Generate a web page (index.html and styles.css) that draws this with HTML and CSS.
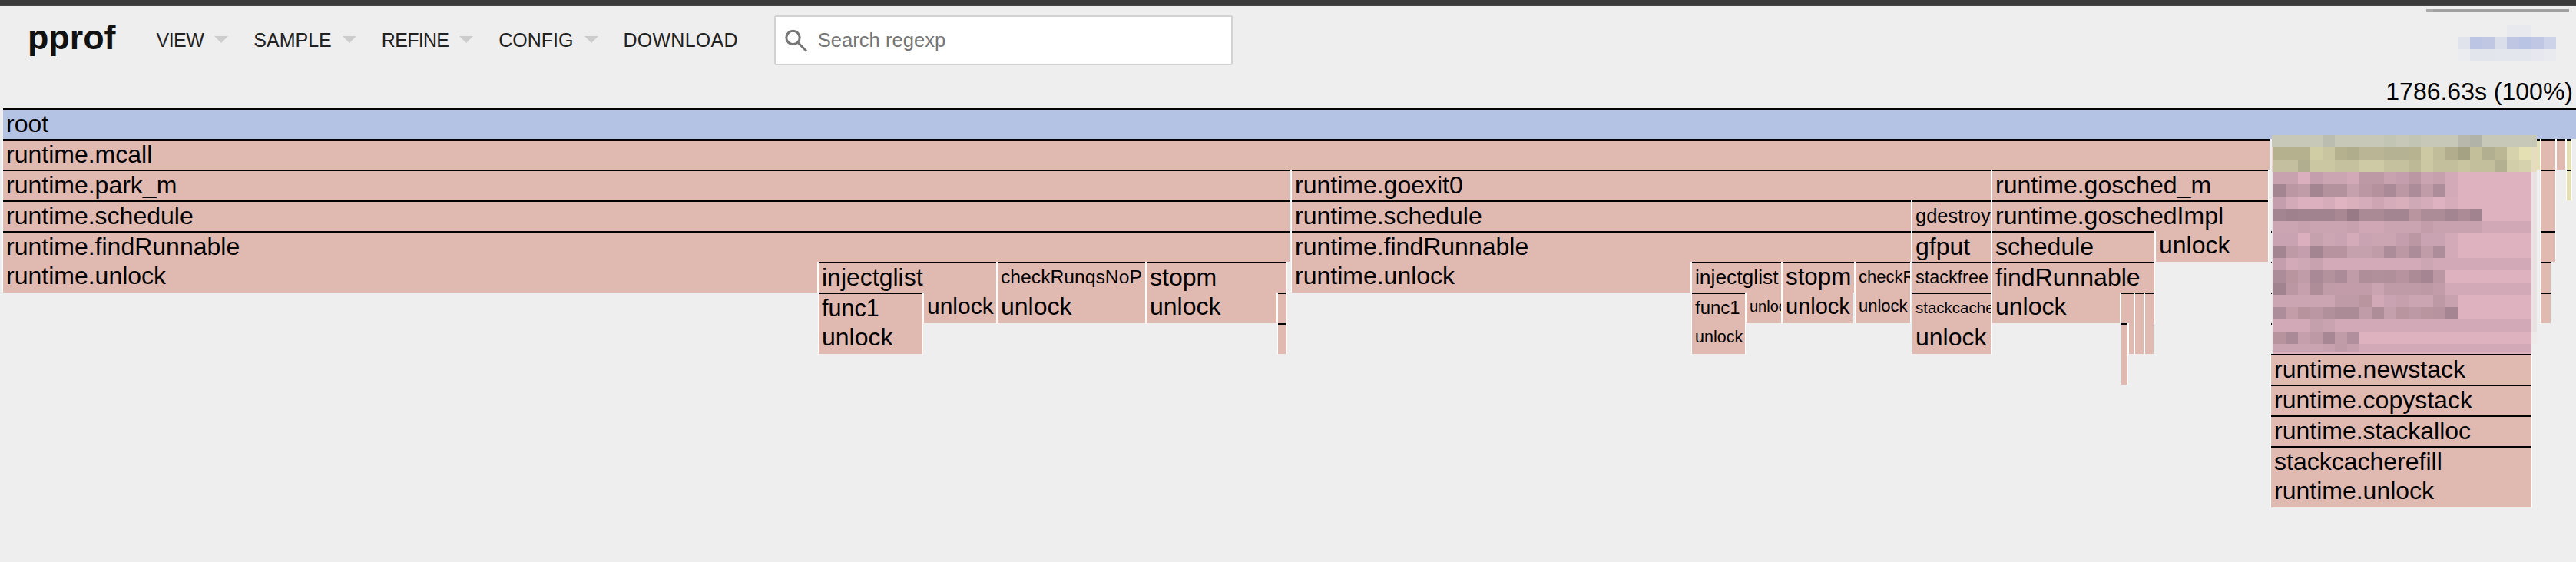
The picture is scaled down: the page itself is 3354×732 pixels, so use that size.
FILE: index.html
```html
<!DOCTYPE html>
<html lang="en">
<head>
<meta charset="utf-8">
<title>pprof</title>
<link rel="stylesheet" href="styles.css">
</head>
<body>
<div class="topbar"></div>
<header class="header">
  <div class="logo">pprof</div>
  <nav class="menu">
    <div class="menu-item view">VIEW<span class="caret"></span></div>
    <div class="menu-item">SAMPLE<span class="caret"></span></div>
    <div class="menu-item refine">REFINE<span class="caret"></span></div>
    <div class="menu-item">CONFIG<span class="caret"></span></div>
    <div class="menu-item download">DOWNLOAD</div>
  </nav>
  <div class="search">
    <svg class="search-icon" viewBox="0 0 30 30" width="30" height="30"><circle cx="10.5" cy="11" r="8.7"/><path d="M16.8 17.3 28 28.5"/></svg>
    <span class="search-text">Search regexp</span>
  </div>
  <svg class="account" width="186" height="68" viewBox="0 0 186 68" shape-rendering="crispEdges">
    <rect x="0" y="0" width="9" height="4" fill="#aaaaaa"/><rect x="9" y="0" width="177" height="4" fill="#a0a0a0"/>
    <rect x="105" y="20" width="32" height="16" fill="#e8e9ee"/>
    <rect x="41" y="36" width="16" height="16" fill="#e1e3ec"/><rect x="57" y="36" width="16" height="16" fill="#bcc5e3"/><rect x="73" y="36" width="16" height="16" fill="#bfc7e2"/><rect x="89" y="36" width="16" height="16" fill="#dadeea"/><rect x="105" y="36" width="16" height="16" fill="#bec6e4"/><rect x="121" y="36" width="16" height="16" fill="#b9c3e3"/><rect x="137" y="36" width="16" height="16" fill="#bfc7e4"/><rect x="153" y="36" width="16" height="16" fill="#cdd3e8"/>
    <rect x="41" y="52" width="16" height="16" fill="#ebecf0"/><rect x="57" y="52" width="32" height="16" fill="#e3e5ec"/><rect x="89" y="52" width="48" height="16" fill="#e4e6ee"/><rect x="137" y="52" width="16" height="16" fill="#e7e8ef"/><rect x="153" y="52" width="16" height="16" fill="#e9eaef"/>
  </svg>
</header>
<div class="total">1786.63s (100%)</div>
<main class="flame">
  <div class="box root r0" style="left:4px;width:3350px">root</div>

  <div class="box r1" style="left:4px;width:2951px">runtime.mcall</div>
  <div class="box r1" style="left:3308px;width:19px"></div>
  <div class="box r1" style="left:3329px;width:11px"></div>
  <div class="box r1 yellow" style="left:3342px;width:6px"></div>
  <div class="box r1 yellow" style="left:3303px;width:3px"></div>

  <div class="box r2" style="left:4px;width:1675px">runtime.park_m</div>
  <div class="box r2" style="left:1682px;width:910px">runtime.goexit0</div>
  <div class="box r2" style="left:2594px;width:359px">runtime.gosched_m</div>
  <div class="box r2 tall" style="left:3308px;width:19px"></div>
  <div class="box r2 yellow" style="left:3342px;width:6px"></div>

  <div class="box r3" style="left:4px;width:1675px">runtime.schedule</div>
  <div class="box r3" style="left:1682px;width:806px">runtime.schedule</div>
  <div class="box r3" style="left:2490px;width:102px;font-size:25.5px">gdestroy</div>
  <div class="box r3" style="left:2594px;width:359px">runtime.goschedImpl</div>

  <div class="box r4" style="left:4px;width:1675px">runtime.findRunnable</div>
  <div class="box r4" style="left:1682px;width:806px">runtime.findRunnable</div>
  <div class="box r4" style="left:2490px;width:102px">gfput</div>
  <div class="box r4" style="left:2594px;width:211px">schedule</div>
  <div class="box r4 flat" style="left:2807px;width:146px">unlock</div>
  <div class="box r4" style="left:3308px;width:19px"></div>

  <div class="box r5 flat" style="left:4px;width:1060px">runtime.unlock</div>
  <div class="box r5" style="left:1066px;width:231px">injectglist</div>
  <div class="box r5" style="left:1299px;width:192px;font-size:24.7px">checkRunqsNoP</div>
  <div class="box r5" style="left:1493px;width:182px">stopm</div>
  <div class="box r5 flat" style="left:1682px;width:519px">runtime.unlock</div>
  <div class="box r5" style="left:2203px;width:116px;font-size:26.4px">injectglist</div>
  <div class="box r5" style="left:2321px;width:93px;font-size:31.3px">stopm</div>
  <div class="box r5" style="left:2416px;width:71px;font-size:22px">checkRunqsNoP</div>
  <div class="box r5" style="left:2490px;width:102px;font-size:23.4px">stackfree</div>
  <div class="box r5" style="left:2594px;width:211px">findRunnable</div>
  <div class="box r5" style="left:3308px;width:13px"></div>

  <div class="box r6" style="left:1066px;width:135px;font-size:30.5px">func1</div>
  <div class="box r6 flat" style="left:1203px;width:94px;font-size:30px">unlock</div>
  <div class="box r6 flat" style="left:1299px;width:192px">unlock</div>
  <div class="box r6 flat" style="left:1493px;width:169px">unlock</div>
  <div class="box r6" style="left:1664px;width:11px"></div>
  <div class="box r6" style="left:2203px;width:69px;font-size:24px">func1</div>
  <div class="box r6 flat" style="left:2274px;width:45px;font-size:20px">unlock</div>
  <div class="box r6 flat" style="left:2321px;width:91px;font-size:29px">unlock</div>
  <div class="box r6 flat" style="left:2416px;width:71px;font-size:22px">unlock</div>
  <div class="box r6" style="left:2490px;width:102px;font-size:20.5px">stackcacherefill</div>
  <div class="box r6 flat" style="left:2594px;width:166px">unlock</div>
  <div class="box r6" style="left:2762px;width:16px"></div>
  <div class="box r6" style="left:2780px;width:11px"></div>
  <div class="box r6" style="left:2793px;width:12px"></div>
  <div class="box r6" style="left:3308px;width:13px"></div>

  <div class="box r7 flat" style="left:1066px;width:135px">unlock</div>
  <div class="box r7" style="left:1664px;width:11px"></div>
  <div class="box r7 flat" style="left:2203px;width:69px;font-size:21.5px">unlock</div>
  <div class="box r7 flat" style="left:2490px;width:102px">unlock</div>
  <div class="box r7 tall" style="left:2762px;width:8px"></div>
  <div class="box r7 flat" style="left:2772px;width:6px"></div>
  <div class="box r7 flat" style="left:2780px;width:11px"></div>
  <div class="box r7 flat" style="left:2793px;width:11px"></div>

  <div class="tick t4" style="left:2957px"></div>
  <div class="tick t5" style="left:2957px"></div>
  <div class="tick t6" style="left:2957px"></div>
  <div class="tick t7" style="left:2957px"></div>

  <svg class="mosaic" width="345" height="285" viewBox="0 0 345 285" shape-rendering="crispEdges">
    <rect x="0" y="0" width="345" height="16" fill="#c8c8b9"/>
    <rect x="0" y="16" width="2" height="32" fill="#e8d4c8"/>
    <rect x="338" y="16" width="7" height="32" fill="#e6dcc0"/>
    <rect x="0" y="48" width="2" height="235" fill="#f0e2e4"/>
    <rect x="338" y="48" width="7" height="208" fill="#e9e3e4"/>
    <rect x="338" y="256" width="7" height="16" fill="#eeeae9"/>
    <rect x="2" y="283" width="336" height="2" fill="#dfb2c0"/>
    <g transform="translate(2 0) scale(16)" stroke-width="1" fill="none">
      <path stroke="#bcbdb1" d="M4 .5h1"/><path stroke="#c2c4b4" d="M9 .5h1M11 .5h1"/><path stroke="#b8b9ac" d="M15 .5h1"/><path stroke="#b2b3a8" d="M16 .5h1"/>

      <path stroke="#b5b18f" d="M0 1.5h3M5 1.5h1"/><path stroke="#d0cca4" d="M3 1.5h1"/><path stroke="#c9c5a0" d="M4 1.5h1"/><path stroke="#b0ad8d" d="M6 1.5h1"/><path stroke="#b9b595" d="M7 1.5h2"/><path stroke="#b5b193" d="M9 1.5h2"/><path stroke="#b7b391" d="M11 1.5h1"/><path stroke="#cdc9a3" d="M12 1.5h1"/><path stroke="#c1bd9b" d="M13 1.5h1"/><path stroke="#b1ad8d" d="M14 1.5h1"/><path stroke="#a5a183" d="M15 1.5h1"/><path stroke="#c3bf9b" d="M16 1.5h1"/><path stroke="#b2ae90" d="M17 1.5h1"/><path stroke="#bbb795" d="M18 1.5h1"/><path stroke="#d6d2ac" d="M19 1.5h1"/><path stroke="#e4e0b4" d="M20 1.5h1"/>

      <path stroke="#c3bf9f" d="M0 2.5h2"/><path stroke="#b1ae90" d="M2 2.5h1"/><path stroke="#cbc7a3" d="M3 2.5h2"/><path stroke="#c5c19f" d="M5 2.5h2M9 2.5h2"/><path stroke="#cfcaa6" d="M7 2.5h2"/><path stroke="#bdb997" d="M11 2.5h1"/><path stroke="#ccc8a4" d="M12 2.5h1"/><path stroke="#c3bf9d" d="M13 2.5h2M16 2.5h2"/><path stroke="#c9c5a1" d="M15 2.5h1"/><path stroke="#b3af91" d="M18 2.5h1"/><path stroke="#d2ceaa" d="M19 2.5h1"/><path stroke="#d6d2ae" d="M20 2.5h1"/>

      <path stroke="#c9a2b0" d="M0 3.5h2M9 3.5h1"/><path stroke="#dbafbd" d="M2 3.5h1"/><path stroke="#c49eac" d="M3 3.5h1M10 3.5h1"/><path stroke="#cca5b3" d="M4 3.5h2"/><path stroke="#d1a9b7" d="M6 3.5h1"/><path stroke="#bd98a5" d="M7 3.5h2"/><path stroke="#bb96a3" d="M11 3.5h1"/><path stroke="#cba4b2" d="M12 3.5h1"/><path stroke="#c6a0ad" d="M13 3.5h1"/><path stroke="#d2aab8" d="M14 3.5h1"/><path stroke="#dfb2c0" d="M15 3.5h6"/>

      <path stroke="#a38591" d="M0 4.5h1M3 4.5h1"/><path stroke="#bb96a3" d="M1 4.5h1M7 4.5h1"/><path stroke="#c09ba8" d="M2 4.5h1M12 4.5h1"/><path stroke="#b3919d" d="M4 4.5h2"/><path stroke="#c5a0ad" d="M6 4.5h1"/><path stroke="#b5919e" d="M8 4.5h1"/><path stroke="#ab8a97" d="M9 4.5h1"/><path stroke="#bc97a4" d="M10 4.5h1"/><path stroke="#ad8c99" d="M11 4.5h1"/><path stroke="#ae8d9a" d="M13 4.5h1"/><path stroke="#d2aab8" d="M14 4.5h1"/><path stroke="#dfb2c0" d="M15 4.5h6"/>

      <path stroke="#c49eac" d="M0 5.5h1"/><path stroke="#d2aab8" d="M1 5.5h1"/><path stroke="#dcb0be" d="M2 5.5h2"/><path stroke="#d6acba" d="M4 5.5h1M14 5.5h1"/><path stroke="#e0b4c1" d="M5 5.5h1"/><path stroke="#dab0bd" d="M6 5.5h1"/><path stroke="#d5acb9" d="M7 5.5h1M9 5.5h1M12 5.5h1"/><path stroke="#cda5b3" d="M8 5.5h1"/><path stroke="#d9afbc" d="M10 5.5h1"/><path stroke="#d0a9b6" d="M11 5.5h1"/><path stroke="#deb2c0" d="M13 5.5h1"/><path stroke="#dfb2c0" d="M15 5.5h6"/>

      <path stroke="#a38591" d="M0 6.5h1M9 6.5h2"/><path stroke="#9f818d" d="M1 6.5h1"/><path stroke="#a1838f" d="M2 6.5h3"/><path stroke="#a98894" d="M5 6.5h1"/><path stroke="#987a87" d="M6 6.5h1"/><path stroke="#aa8a95" d="M7 6.5h2"/><path stroke="#b9959f" d="M11 6.5h1"/><path stroke="#ac8c97" d="M12 6.5h2"/><path stroke="#a28591" d="M14 6.5h1"/><path stroke="#ac8a96" d="M15 6.5h1"/><path stroke="#a18390" d="M16 6.5h1"/><path stroke="#dfb2c0" d="M17 6.5h4"/>

      <path stroke="#cca5b3" d="M0 7.5h2"/><path stroke="#c8a1af" d="M2 7.5h1M6 7.5h1"/><path stroke="#cba4b2" d="M3 7.5h3M9 7.5h3"/><path stroke="#cfa7b5" d="M7 7.5h2"/><path stroke="#c39daa" d="M12 7.5h1"/><path stroke="#c9a2b0" d="M13 7.5h4"/><path stroke="#d1a9b6" d="M17 7.5h4"/>

      <path stroke="#c9a3b1" d="M0 8.5h2M5 8.5h1M7 8.5h1M12 8.5h2"/><path stroke="#dbafbd" d="M2 8.5h1"/><path stroke="#c5a0ad" d="M3 8.5h1"/><path stroke="#cda6b4" d="M4 8.5h1"/><path stroke="#d3abb9" d="M6 8.5h1"/><path stroke="#cca5b3" d="M8 8.5h2"/><path stroke="#c49eac" d="M10 8.5h1"/><path stroke="#bb97a4" d="M11 8.5h1"/><path stroke="#d2aab8" d="M14 8.5h1"/><path stroke="#dfb2c0" d="M15 8.5h6"/>

      <path stroke="#a38591" d="M0 9.5h1M3 9.5h1"/><path stroke="#be9aa6" d="M1 9.5h1"/><path stroke="#c49eac" d="M2 9.5h1"/><path stroke="#b7939f" d="M4 9.5h2"/><path stroke="#c5a0ad" d="M6 9.5h2"/><path stroke="#c09ba8" d="M8 9.5h1M12 9.5h1"/><path stroke="#ad8c99" d="M9 9.5h1M11 9.5h1"/><path stroke="#bc97a4" d="M10 9.5h1"/><path stroke="#ae8d9a" d="M13 9.5h1"/><path stroke="#d2aab8" d="M14 9.5h1"/><path stroke="#dfb2c0" d="M15 9.5h6"/>

      <path stroke="#c49eac" d="M0 10.5h1"/><path stroke="#d2aab8" d="M1 10.5h1"/><path stroke="#cfa8b5" d="M2 10.5h1"/><path stroke="#c9a2af" d="M3 10.5h1"/><path stroke="#d3abb8" d="M4 10.5h8"/><path stroke="#cda6b3" d="M12 10.5h1"/><path stroke="#d2a9b6" d="M13 10.5h8"/>

      <path stroke="#ad8c99" d="M0 11.5h1"/><path stroke="#b9959f" d="M1 11.5h1"/><path stroke="#c09ba8" d="M2 11.5h1M6 11.5h1"/><path stroke="#a98995" d="M3 11.5h1"/><path stroke="#b3919d" d="M4 11.5h1"/><path stroke="#ab8b97" d="M5 11.5h1"/><path stroke="#af8e9a" d="M7 11.5h1"/><path stroke="#b18f9b" d="M8 11.5h1"/><path stroke="#b08f9b" d="M9 11.5h1"/><path stroke="#b7939f" d="M10 11.5h1"/><path stroke="#ac8b97" d="M11 11.5h1"/><path stroke="#a58591" d="M12 11.5h1"/><path stroke="#bb97a3" d="M13 11.5h1"/><path stroke="#dfb2c0" d="M14 11.5h7"/>

      <path stroke="#a18390" d="M0 12.5h1"/><path stroke="#bb97a3" d="M1 12.5h1"/><path stroke="#c6a0ad" d="M2 12.5h1"/><path stroke="#ae8d99" d="M3 12.5h1"/><path stroke="#c09ba8" d="M4 12.5h1"/><path stroke="#c29da9" d="M5 12.5h3M13 12.5h1"/><path stroke="#cba4b1" d="M8 12.5h1"/><path stroke="#bf9ba7" d="M9 12.5h3"/><path stroke="#bd99a5" d="M12 12.5h1"/><path stroke="#d2a9b6" d="M14 12.5h7"/>

      <path stroke="#cca5b3" d="M0 13.5h5M11 13.5h2"/><path stroke="#bf9aa7" d="M5 13.5h2"/><path stroke="#b9959f" d="M7 13.5h1"/><path stroke="#d1a9b7" d="M8 13.5h1"/><path stroke="#c9a3b1" d="M9 13.5h1"/><path stroke="#c6a0ad" d="M10 13.5h1"/><path stroke="#bd99a5" d="M13 13.5h1"/><path stroke="#c9a2af" d="M14 13.5h1"/><path stroke="#dfb2c0" d="M15 13.5h6"/>

      <path stroke="#ae8d9a" d="M0 14.5h1"/><path stroke="#c39ea9" d="M1 14.5h1"/><path stroke="#b7939e" d="M2 14.5h1"/><path stroke="#bb97a3" d="M3 14.5h1"/><path stroke="#b18f9b" d="M4 14.5h1"/><path stroke="#aa8b96" d="M5 14.5h2"/><path stroke="#c09ba8" d="M7 14.5h1"/><path stroke="#ae8d99" d="M8 14.5h1"/><path stroke="#c49fac" d="M9 14.5h1"/><path stroke="#b9959f" d="M10 14.5h1"/><path stroke="#bd99a5" d="M11 14.5h1"/><path stroke="#b9969f" d="M12 14.5h1"/><path stroke="#b7939f" d="M13 14.5h1"/><path stroke="#a58591" d="M14 14.5h1"/><path stroke="#dfb2c0" d="M15 14.5h6"/>

      <path stroke="#d1a9b7" d="M0 15.5h3M5 15.5h16"/><path stroke="#c4a0ac" d="M3 15.5h1"/><path stroke="#c9a3b0" d="M4 15.5h1"/>

      <path stroke="#b7939e" d="M0 16.5h1"/><path stroke="#aa8a97" d="M1 16.5h1"/><path stroke="#c5a0ac" d="M2 16.5h1"/><path stroke="#bd99a5" d="M3 16.5h1"/><path stroke="#a78794" d="M4 16.5h1"/><path stroke="#c09ba8" d="M5 16.5h1"/><path stroke="#b18f9c" d="M6 16.5h1"/><path stroke="#dfb2c0" d="M7 16.5h14"/>

      <path stroke="#cba4b1" stroke-width=".6875" d="M0 17.344h4"/><path stroke="#c7a1ae" stroke-width=".6875" d="M4 17.344h1"/><path stroke="#bf9ba8" stroke-width=".6875" d="M5 17.344h1"/><path stroke="#c6a0ad" stroke-width=".6875" d="M6 17.344h1"/><path stroke="#d1a9b7" stroke-width=".6875" d="M7 17.344h14"/>
    </g>
  </svg>

  <div class="box r8" style="left:2957px;width:339px">runtime.newstack</div>
  <div class="box r9" style="left:2957px;width:339px">runtime.copystack</div>
  <div class="box r10" style="left:2957px;width:339px">runtime.stackalloc</div>
  <div class="box r11" style="left:2957px;width:339px">stackcacherefill</div>
  <div class="box r12 flat" style="left:2957px;width:339px">runtime.unlock</div>
</main>
</body>
</html>
```
FILE: styles.css
```css
html, body {
  margin: 0;
  height: 732px;
  overflow: hidden;
  background: #eeeeee;
  font-family: "Liberation Sans", Arial, sans-serif;
  color: #000;
}

.topbar {
  height: 8px;
  background: linear-gradient(#3b3b3b 6px, #444444 6px);
}

.header {
  display: flex;
  align-items: center;
  height: 77px;
  box-sizing: border-box;
  padding: 12px 9px 0 36px;
}

.logo {
  font-size: 44.8px;
  font-weight: bold;
  color: #111111;
  margin-right: 53px;
  margin-bottom: 10px;
  line-height: 50px;
}

.menu {
  display: flex;
  gap: 33px;
  font-size: 25px;
  color: #212121;
}

.menu-item {
  display: flex;
  align-items: center;
  gap: 14px;
  white-space: nowrap;
}

.view { letter-spacing: -0.5px; }
.refine { letter-spacing: -0.7px; }
.download { letter-spacing: 0.25px; }

.caret {
  width: 0;
  height: 0;
  border-left: 9px solid transparent;
  border-right: 9px solid transparent;
  border-top: 9px solid #cccccc;
  margin-top: -3px;
}

.search {
  display: flex;
  align-items: center;
  gap: 13px;
  box-sizing: border-box;
  width: 597px;
  height: 65px;
  margin-left: 47px;
  padding-left: 12px;
  background: #fff;
  border: 2px solid #d2d2d2;
  border-radius: 3px;
}

.search-icon {
  fill: none;
  stroke: #757575;
  stroke-width: 3;
}

.search-text {
  font-size: 25.6px;
  color: #757575;
}

.account {
  margin-left: auto;
  align-self: flex-start;
  margin-top: -8px;
}

.total {
  box-sizing: border-box;
  height: 56px;
  padding: 16px 4px 0 0;
  text-align: right;
  font-size: 32px;
  line-height: 36px;
}

.flame {
  position: relative;
  height: 591px;
}

.box {
  position: absolute;
  box-sizing: border-box;
  height: 40px;
  padding-left: 4px;
  border-top: 2px solid #000;
  background: #e0b9b1;
  box-shadow: -1px 0 0 #fff, 1px 0 0 #fff;
  font-size: 32px;
  line-height: 36px;
  white-space: nowrap;
  overflow: hidden;
  color: #000;
}

.root { background: #b4c2e3; box-shadow: none; }
.yellow { background: #e4e0b4; }
.flat { border-top: 0; }
.tall { height: 80px; }

.r0 { top: 0; }
.r1 { top: 40px; }
.r2 { top: 80px; }
.r3 { top: 120px; }
.r4 { top: 160px; }
.r5 { top: 200px; }
.r6 { top: 240px; }
.r7 { top: 280px; }
.r8 { top: 320px; }
.r9 { top: 360px; }
.r10 { top: 400px; }
.r11 { top: 440px; }
.r12 { top: 480px; }

.tick {
  position: absolute;
  width: 1px;
  height: 2px;
  background: #000;
}
.t4 { top: 160px; }
.t5 { top: 200px; }
.t6 { top: 240px; }
.t7 { top: 280px; }

.mosaic {
  position: absolute;
  left: 2958px;
  top: 35px;
}
```
